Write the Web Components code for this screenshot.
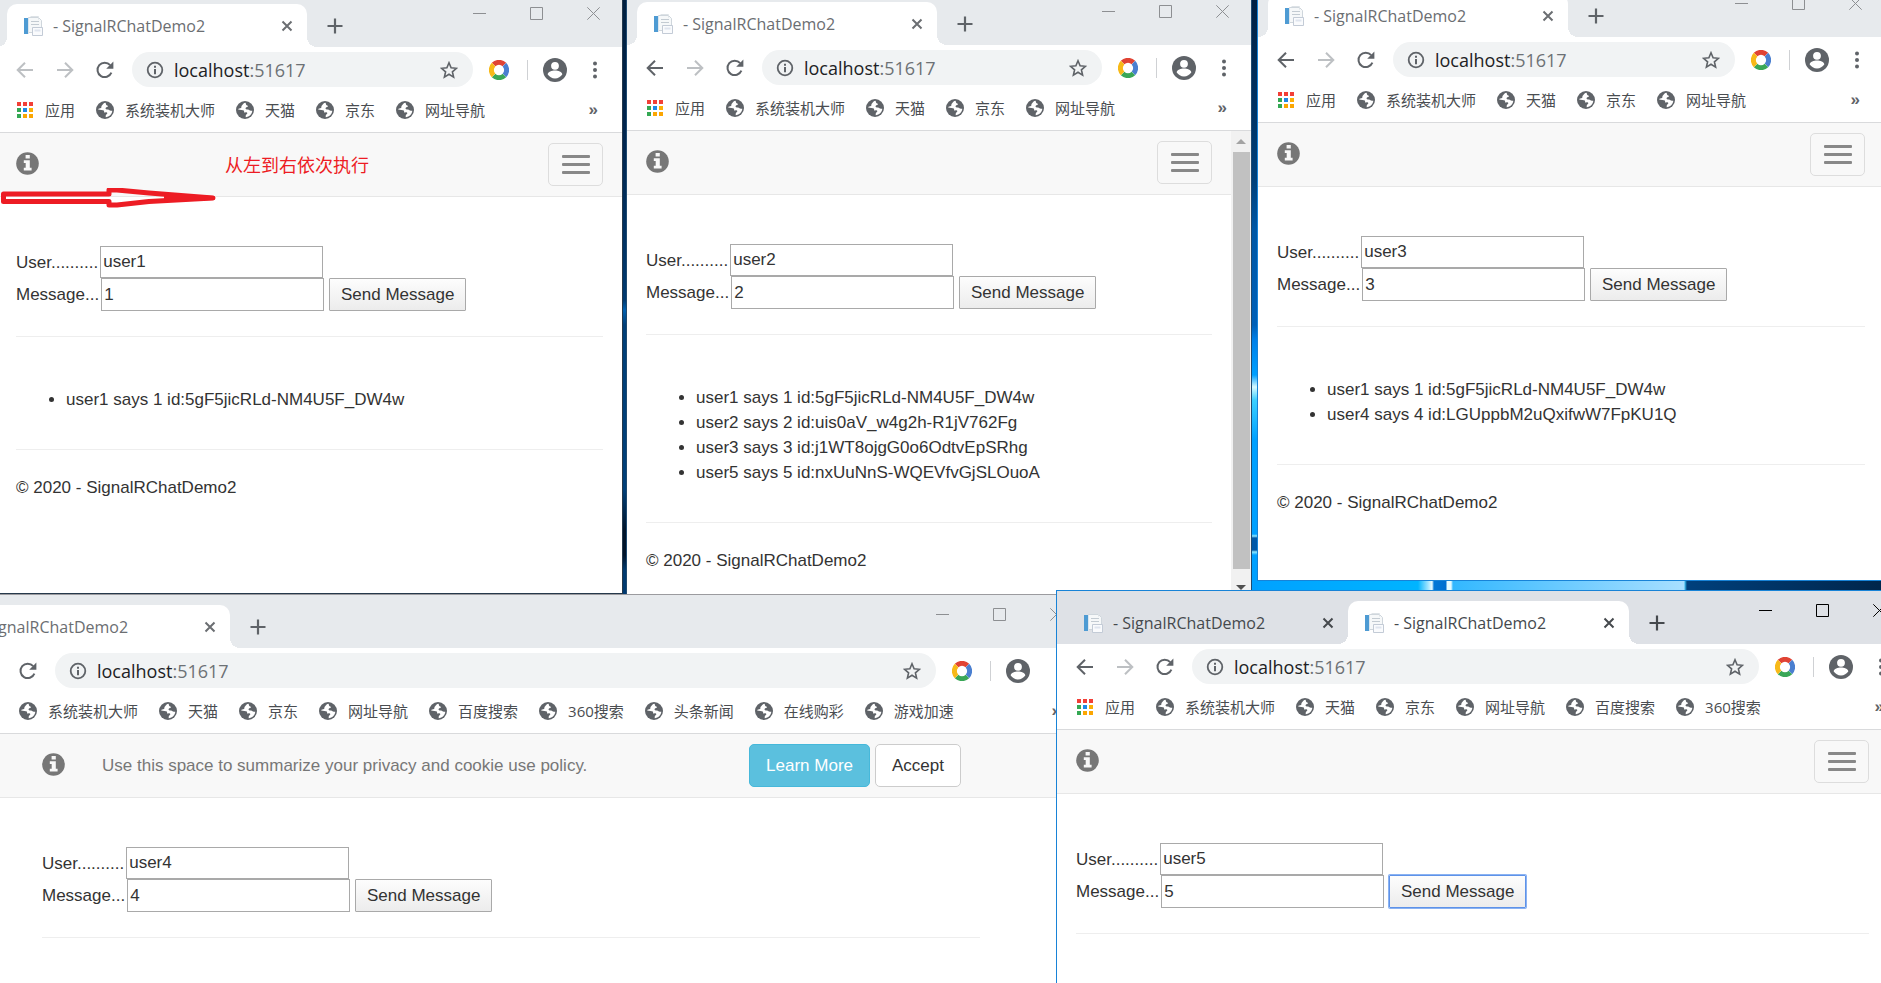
<!DOCTYPE html>
<html lang="zh-CN">
<head>
<meta charset="utf-8">
<title>SignalRChatDemo2</title>
<style>
  html, body { margin: 0; height: 100%; overflow: hidden; }
  body { font-family: "Liberation Sans", Arial, sans-serif; }
</style>
</head>
<body>
<desk-top>
  <browser-window style="left:-4px;top:-7px;width:627px;height:601px" no-back>
    <browser-tab slot="tabs" active>- SignalRChatDemo2</browser-tab>
    <book-mark slot="marks" icon="apps">应用</book-mark>
    <book-mark slot="marks">系统装机大师</book-mark>
    <book-mark slot="marks">天猫</book-mark>
    <book-mark slot="marks">京东</book-mark>
    <book-mark slot="marks">网址导航</book-mark>
    <chat-page user="user1" message="1">
      <li>user1 says 1 id:5gF5jicRLd-NM4U5F_DW4w</li>
    </chat-page>
  </browser-window>

  <browser-window style="left:626px;top:-9px;width:626px;height:608px;--edge:#1f4a70">
    <browser-tab slot="tabs" active>- SignalRChatDemo2</browser-tab>
    <book-mark slot="marks" icon="apps">应用</book-mark>
    <book-mark slot="marks">系统装机大师</book-mark>
    <book-mark slot="marks">天猫</book-mark>
    <book-mark slot="marks">京东</book-mark>
    <book-mark slot="marks">网址导航</book-mark>
    <chat-page user="user2" message="2">
      <li>user1 says 1 id:5gF5jicRLd-NM4U5F_DW4w</li>
      <li>user2 says 2 id:uis0aV_w4g2h-R1jV762Fg</li>
      <li>user3 says 3 id:j1WT8ojgG0o6OdtvEpSRhg</li>
      <li>user5 says 5 id:nxUuNnS-WQEVfvGjSLOuoA</li>
    </chat-page>
    <page-scrollbar slot="scroll"></page-scrollbar>
  </browser-window>

  <browser-window style="left:1257px;top:-17px;right:-4px;height:598px;--edge:#1883d7">
    <browser-tab slot="tabs" active>- SignalRChatDemo2</browser-tab>
    <book-mark slot="marks" icon="apps">应用</book-mark>
    <book-mark slot="marks">系统装机大师</book-mark>
    <book-mark slot="marks">天猫</book-mark>
    <book-mark slot="marks">京东</book-mark>
    <book-mark slot="marks">网址导航</book-mark>
    <chat-page user="user3" message="3">
      <li>user1 says 1 id:5gF5jicRLd-NM4U5F_DW4w</li>
      <li>user4 says 4 id:LGUppbM2uQxifwW7FpKU1Q</li>
    </chat-page>
  </browser-window>

  <browser-window style="left:-81px;top:594px;right:795px;bottom:-20px;--edge:#9b9b9f;--marks-left:99px">
    <browser-tab slot="tabs" active>- SignalRChatDemo2</browser-tab>
    <book-mark slot="marks">系统装机大师</book-mark>
    <book-mark slot="marks">天猫</book-mark>
    <book-mark slot="marks">京东</book-mark>
    <book-mark slot="marks">网址导航</book-mark>
    <book-mark slot="marks">百度搜索</book-mark>
    <book-mark slot="marks">360搜索</book-mark>
    <book-mark slot="marks">头条新闻</book-mark>
    <book-mark slot="marks">在线购彩</book-mark>
    <book-mark slot="marks">游戏加速</book-mark>
    <chat-page user="user4" message="4" wide></chat-page>
  </browser-window>

  <browser-window style="left:1056px;top:590px;right:-28px;bottom:-20px;--edge:#1883d7;--strip:#dee1e6;--caption:#000;--tab-ink:#45494d;--tab-width:281px">
    <browser-tab slot="tabs">- SignalRChatDemo2</browser-tab>
    <browser-tab slot="tabs" active>- SignalRChatDemo2</browser-tab>
    <book-mark slot="marks" icon="apps">应用</book-mark>
    <book-mark slot="marks">系统装机大师</book-mark>
    <book-mark slot="marks">天猫</book-mark>
    <book-mark slot="marks">京东</book-mark>
    <book-mark slot="marks">网址导航</book-mark>
    <book-mark slot="marks">百度搜索</book-mark>
    <book-mark slot="marks">360搜索</book-mark>
    <chat-page user="user5" message="5" sending></chat-page>
    <page-scrollbar slot="scroll"></page-scrollbar>
  </browser-window>

  <margin-note>从左到右依次执行</margin-note>
</desk-top>

<script>
const ICONS = {
  back: ['0 0 18 18', '<path d="M17 9H2M9 1.7 1.7 9 9 16.3" fill="none" stroke="currentColor" stroke-width="2"/>'],
  forward: ['0 0 18 18', '<path d="M1 9h15M9 1.7 16.3 9 9 16.3" fill="none" stroke="currentColor" stroke-width="2"/>'],
  reload: ['0 0 18 18', '<path d="M15.4 11.6A7.2 7.2 0 1 1 14.2 4.2" fill="none" stroke="currentColor" stroke-width="2"/><path d="M17.4.6v7.2h-7.2z" fill="currentColor"/>'],
  site: ['0 0 18 18', '<circle cx="9" cy="9" r="7.3" fill="none" stroke="currentColor" stroke-width="1.8"/><path d="M8 8h2v5.2H8zM8 4.8h2v2H8z" fill="currentColor"/>'],
  star: ['0 0 18 18', '<path d="m9 1.8 2.1 5 5.3.5-4 3.5 1.2 5.3L9 13.3l-4.6 2.8 1.2-5.3-4-3.5 5.3-.5z" fill="none" stroke="currentColor" stroke-width="1.6"/>'],
  ring: ['0 0 20 20', '<g fill="none" stroke-width="5"><path d="M4.6 4.6a7.6 7.6 0 0 1 10.8 0" stroke="#e04334"/><path d="M15.4 4.6a7.6 7.6 0 0 1 0 10.8" stroke="#4a7fd0"/><path d="M15.4 15.4a7.6 7.6 0 0 1-10.8 0" stroke="#3aa757"/><path d="M4.6 15.4a7.6 7.6 0 0 1 0-10.8" stroke="#f7b918"/></g>'],
  person: ['0 0 24 24', '<circle cx="12" cy="12" r="12" fill="currentColor"/><circle cx="12" cy="7.8" r="3.9" fill="#fff"/><path d="M4.7 16.6c0-2.6 4.3-4 7.3-4s7.3 1.4 7.3 4c-1.6 2.4-4.2 3.9-7.3 3.9s-5.7-1.5-7.3-3.9z" fill="#fff"/>'],
  dots: ['0 0 18 18', '<g fill="currentColor"><circle cx="9" cy="2.5" r="2"/><circle cx="9" cy="9" r="2"/><circle cx="9" cy="15.5" r="2"/></g>'],
  apps: ['0 0 18 18', '<path d="M1 1h4v4H1zM7 1h4v4H7zM13 1h4v4h-4z" fill="#f23f37"/><path d="M1 7h4v4H1z" fill="#34a853"/><path d="M7 7h4v4H7z" fill="#1e88e5"/><path d="M13 7h4v4h-4z" fill="#fbb005"/><path d="M1 13h4v4H1z" fill="#34a853"/><path d="M7 13h4v4H7zM13 13h4v4h-4z" fill="#fba602"/>'],
  globe: ['0 0 18 18', '<circle cx="9" cy="9" r="9" fill="#5f6368"/><path d="M9.6 1.8C7.5 2 7 3.4 5.7 4.7c-.8.9.2 1.700-.7 2.300-1 .5-2.600.4-2.900 1.500L7 9.300c1.200.2 1.300 1.200 1 2.200l2.300-.2c1.200.1 1.300 1.400.4 2-.7.4-1 .9-1 1.800v1.100c3.500-.3 6.300-3.100 6.600-6.500-1.400.4-2.400-.3-3.500-1-1.200-.7-2.800.2-3.200-1-.3-1 .8-1.600 2.200-1.900.3-1.100-.1-1.300-1.200-1.600-.7-.4-.6-1.300-1-2.400z" fill="#fff"/>'],
  page: ['0 0 20 20', '<path d="M5.500 1.500h10l3 3v12h-13z" fill="#f6f8f9" stroke="#cfd6dc"/><path d="M7.500.500h8v3" fill="none" stroke="#dde2e6"/><path d="M8 5.500h8M8 8.500h8" fill="none" stroke="#c3cbd2"/><path d="M1 2h4v16H1z" fill="#4e9bd3"/><path d="M5 2h1v16H5z" fill="#dce6ee"/><path d="M9.500 11.500h10v8h-10z" fill="#fafbfd" stroke="#c3cbd6"/><path d="M11.500 13.500h6v2h-6z" fill="#dfe4ee"/>'],
  close: ['0 0 12 12', '<path d="m1.5 1.5 9 9M10.5 1.5l-9 9" stroke="currentColor" stroke-width="2"/>'],
  plus: ['0 0 16 16', '<path d="M8 .5v15M.5 8h15" stroke="currentColor" stroke-width="2.2"/>'],
  min: ['0 0 13 13', '<path d="M0 6.5h13" stroke="currentColor"/>'],
  max: ['0 0 13 13', '<path d="M.5.5h12v12H.5z" fill="none" stroke="currentColor"/>'],
  shut: ['0 0 13 13', '<path d="m.3.3 12.4 12.4M12.7.3.3 12.7" stroke="currentColor"/>'],
  info: ['0 0 23 23', '<circle cx="11.5" cy="11.5" r="11.3" fill="#777"/><path d="M9.6 3h4.200v3.600H9.600zM7.800 8.300h6v7.400h1.800v2.700H7.800v-2.700h1.900V11H7.800z" fill="#f8f8f8"/>']
};

function define(name, markup, ready) {
  const template = document.createElement('template');
  template.innerHTML = markup;
  customElements.define(name, class extends HTMLElement {
    connectedCallback() {
      if (this.shadowRoot) return;
      const root = this.attachShadow({ mode: 'open' });
      root.append(template.content.cloneNode(true));
      if (ready) ready(this, root);
    }
  });
}

define('line-icon', `<style>
  :host { display: inline-flex; flex: none; width: 18px; height: 18px; }
  svg { width: 100%; height: 100%; }
</style><svg aria-hidden="true"></svg>`, (el, root) => {
  const [box, shapes] = ICONS[el.getAttribute('name')];
  const svg = root.querySelector('svg');
  svg.setAttribute('viewBox', box);
  svg.innerHTML = shapes;
});

define('desk-top', `<style>
  :host {
    display: block; position: relative; width: 100%; min-height: 100vh; overflow: hidden;
    background:
      linear-gradient(90deg, #00a2ff 0, #00b4ff 160px, #9fe4ff 170px, #e8fbff 174px, #0078d7 176px, #006fd0 188px, #e8fbff 189px, #e8fbff 193px, #33b8ff 195px, #a8dfff 426px, #35b6e8 427px, #00407c 429px, #00264c 620px) 1258px 579px / 100% 12px no-repeat,
      linear-gradient(#001f42 0, #00407a 180px, #0057a5 230px, #0060b8 325px, #0080e8 340px, #00a0ff 375px, #d8fbff 387px, #3cd0ff 400px, #00a0ff 440px, #00a0ff 534px, #8fe8ff 536px, #0058a8 538px, #0058a8 550px, #8fe8ff 552px, #00a0ff 555px) 1252px 0 / 6px 600px no-repeat,
      linear-gradient(#001f3f 0, #002650 150px, #003a70 300px, #0060b0 310px, #003f78 325px, #003f78 490px, #00142b 530px, #00142b 555px, #003a70 570px);
  }
</style><slot></slot>`);

define('browser-window', `<style>
  :host { display: flex; flex-direction: column; position: absolute; box-sizing: border-box; overflow: hidden;
    border: 1px solid var(--edge, #26394b); background: #fff; font-family: "Open Sans", "Noto Sans CJK SC", sans-serif; color: #5f6368; }
  header { display: flex; height: 53px; background: var(--strip, #e7eaed); }
  .tabs { display: flex; flex: 1; min-width: 0; padding: 10px 0 0 10px; }
  button { display: flex; align-items: center; justify-content: center; padding: 0; border: 0; background: none; color: inherit; flex: none; }
  .new { width: 36px; margin-left: 10px; height: 43px; color: var(--tab-ink, #5f6368); }
  .new line-icon { width: 16px; height: 16px; }
  .caption { display: flex; flex: none; color: var(--caption, #8d8f92); }
  .caption button { width: 57px; height: 38px; }
  .caption line-icon { width: 13px; height: 13px; }
  .tools { display: flex; align-items: center; height: 45px; padding: 0 12px 0 8px; }
  .nav { width: 40px; height: 35px; }
  .off { color: #bdc0c3; }
  .address { display: flex; align-items: center; flex: 1; min-width: 0; height: 35px; box-sizing: border-box; margin: 0 16px 0 7px; padding: 0 15px 0 14px; border-radius: 18px; background: #f1f3f4; }
  .url { flex: 1; margin-left: 10px; font-size: 18px; line-height: 24px; color: #6d7175; outline: 0; }
  .url b { font-weight: 400; color: #202124; }
  .ring { width: 20px; height: 20px; }
  hr { width: 1px; height: 20px; border: 0; margin: 0 15px 0 18px; background: #cfd1d4; }
  .me line-icon { width: 24px; height: 24px; }
  .menu { width: 30px; height: 35px; margin-left: 13px; }
  nav { display: flex; align-items: center; height: 35px; padding: 0 24px 5px var(--marks-left, 19px); gap: 21px; border-bottom: 1px solid #d9dadc; }
  .more { margin-left: auto; font-size: 17px; line-height: 20px; font-weight: 600; }
  main { display: flex; flex: 1; min-height: 0; }
  slot:not([name]) { display: block; flex: 1; min-width: 0; }
</style>
<header>
  <div class="tabs"><slot name="tabs"></slot><button class="new" aria-label="New tab"><line-icon name="plus"></line-icon></button></div>
  <div class="caption">
    <button aria-label="Minimize"><line-icon name="min"></line-icon></button>
    <button aria-label="Maximize"><line-icon name="max"></line-icon></button>
    <button aria-label="Close"><line-icon name="shut"></line-icon></button>
  </div>
</header>
<div class="tools">
  <button class="nav back" aria-label="Back"><line-icon name="back"></line-icon></button>
  <button class="nav off" aria-label="Forward"><line-icon name="forward"></line-icon></button>
  <button class="nav" aria-label="Reload"><line-icon name="reload"></line-icon></button>
  <div class="address">
    <line-icon name="site"></line-icon>
    <div class="url" role="textbox" aria-label="Address" contenteditable="true" spellcheck="false"><b>localhost</b>:51617</div>
    <button aria-label="Bookmark this page"><line-icon name="star"></line-icon></button>
  </div>
  <line-icon class="ring" name="ring"></line-icon>
  <hr>
  <button class="me" aria-label="Profile"><line-icon name="person"></line-icon></button>
  <button class="menu" aria-label="Menu"><line-icon name="dots"></line-icon></button>
</div>
<nav><slot name="marks"></slot><button class="more" aria-label="More bookmarks">»</button></nav>
<main><slot></slot><slot name="scroll"></slot></main>`, (el, root) => {
  if (el.hasAttribute('no-back')) root.querySelector('.back').classList.add('off');
});

define('browser-tab', `<style>
  :host { display: flex; align-items: center; position: relative; flex: none; box-sizing: border-box;
    width: var(--tab-width, 300px); height: 43px; padding: 0 14px 0 16px; font-size: 16px; line-height: 22px; color: var(--tab-ink, #6b6e72); }
  :host([active]) { background: #fff; border-radius: 10px 10px 0 0; }
  :host([active])::before, :host([active])::after { content: ""; position: absolute; bottom: 0; width: 10px; height: 10px; }
  :host([active])::before { right: 100%; background: radial-gradient(circle at 0 0, transparent 10px, #fff 10px); }
  :host([active])::after { left: 100%; background: radial-gradient(circle at 100% 0, transparent 10px, #fff 10px); }
  .icon { width: 20px; height: 20px; margin-right: 10px; }
  span { flex: 1; white-space: nowrap; }
  button { display: flex; padding: 0; border: 0; background: none; color: inherit; }
  button line-icon { width: 12px; height: 12px; }
</style>
<line-icon class="icon" name="page"></line-icon><span><slot></slot></span>
<button aria-label="Close tab"><line-icon name="close"></line-icon></button>`);

define('book-mark', `<style>
  :host { display: block; flex: none; }
  a { display: flex; align-items: center; gap: 11px; font-size: 15px; line-height: 22px; color: #4a4d51; text-decoration: none; white-space: nowrap; }
</style><a href="#"><slot></slot></a>`, (el, root) => {
  root.querySelector('a').insertAdjacentHTML('afterbegin', `<line-icon name="${el.getAttribute('icon') || 'globe'}"></line-icon>`);
});

define('page-scrollbar', `<style>
  :host { display: flex; flex-direction: column; flex: none; align-items: center; width: 20px; height: 100%; background: #f1f1f1; }
  .arrow { display: flex; align-items: center; height: 21px; }
  .arrow::before { content: ""; border: 5px solid transparent; border-top: 0; border-bottom-color: #a3a3a3; }
  .down::before { border-top: 5px solid #505050; border-bottom: 0; }
  .thumb { flex: 1; width: 17px; margin-bottom: 8px; background: #c1c1c1; }
</style><div class="arrow"></div><div class="thumb"></div><div class="arrow down"></div>`);

define('consent-bar', `<style>
  :host { display: flex; align-items: center; height: 63px; padding: 0 var(--bar-right) 0 var(--page-left); background: #f8f8f8; border-bottom: 1px solid #e7e7e7; color: #777; font-size: 17px; line-height: 25px; }
  .mark { width: 23px; height: 23px; margin-bottom: 2px; }
  p { margin: 0 0 0 37px; }
  .buttons { display: flex; gap: 5px; margin-left: auto; }
  a, button { box-sizing: border-box; height: 43px; padding: 8px 16px; border: 1px solid #ccc; border-radius: 5px; background: #fff; color: #333; font: inherit; text-decoration: none; }
  a { border-color: #46b8da; background: #5bc0de; color: #fff; }
  .toggle { display: flex; flex-direction: column; justify-content: center; align-items: center; gap: 5px; width: 55px; border-color: #ddd; background: none; }
  i { width: 28px; height: 3px; border-radius: 1px; background: #888; }
</style>
<line-icon class="mark" name="info"></line-icon>`, (el, root) => {
  root.querySelector('line-icon').insertAdjacentHTML('afterend', el.hasAttribute('wide')
    ? '<p>Use this space to summarize your privacy and cookie use policy.</p><div class="buttons"><a href="#">Learn More</a><button>Accept</button></div>'
    : '<div class="buttons"><button class="toggle" aria-label="Toggle navigation"><i></i><i></i><i></i></button></div>');
});

define('chat-page', `<style>
  :host { display: block; --page-left: 19px; --page-right: 19px; --bar-right: 19px; font: 17px/25px "Liberation Sans", Arial, sans-serif; color: #333; }
  :host([wide]) { --page-left: 122px; --page-right: 105px; --bar-right: 124px; }
  .body { padding: 49px var(--page-right) 0 var(--page-left); }
  form { margin: 0; }
  .row { display: flex; align-items: center; height: 33px; }
  .row:first-child { height: 32px; }
  label { padding-right: 2px; }
  input, button { box-sizing: border-box; height: 100%; border: 1px solid #a9a9a9; font: inherit; color: #333; }
  input { width: 223px; padding: 0 2px; background: #fff; outline: 0; }
  button { width: 137px; margin-left: 5px; padding: 0; border-radius: 1px; background: linear-gradient(#fdfdfd, #ececec); }
  :host([sending]) button { border-color: #5e92e8; box-shadow: 0 0 0 1px #8ab2f2; }
  hr { margin: 25px 0; border: 0; border-top: 1px solid #eee; }
  ul { margin: 50px 0 37px; padding-left: 50px; }
  .end { margin-top: 37px; }
  p { margin: 0; }
</style>
<div class="body">
  <form>
    <div class="row"><label for="user">User..........</label><input id="user" type="text"></div>
    <div class="row"><label for="message">Message...</label><input id="message" type="text"><button type="button">Send Message</button></div>
  </form>
  <hr>
</div>`, (el, root) => {
  const body = root.querySelector('.body');
  root.querySelector('#user').value = el.getAttribute('user');
  root.querySelector('#message').value = el.getAttribute('message');
  body.insertAdjacentHTML('beforebegin', el.hasAttribute('wide') ? '<consent-bar wide></consent-bar>' : '<consent-bar></consent-bar>');
  if (el.children.length) {
    body.insertAdjacentHTML('beforeend', '<ul><slot></slot></ul><hr class="end"><p>© 2020 - SignalRChatDemo2</p>');
  }
});

define('margin-note', `<style>
  :host { position: absolute; left: 0; top: 151px; display: block; width: 369px; color: #ed1c24; font: 18px/26px "Noto Sans CJK SC", sans-serif; text-align: right; pointer-events: none; }
  svg { display: block; width: 218px; height: 20px; margin-top: 11px; }
</style><slot></slot>
<svg viewBox="0 0 218 20" fill="none" stroke="#ed1c24" aria-hidden="true">
  <path d="M3.500 6v7.500H109v3.500h8l32-3.500 64-3.500-64-5-32-3h-8v4z" stroke-width="5" stroke-linejoin="round"/>
  <path d="M166 7.500 213 10l-47 1.500z" stroke-width="4" fill="#ed1c24" stroke-linejoin="round"/>
</svg>`);
</script>
</body>
</html>
